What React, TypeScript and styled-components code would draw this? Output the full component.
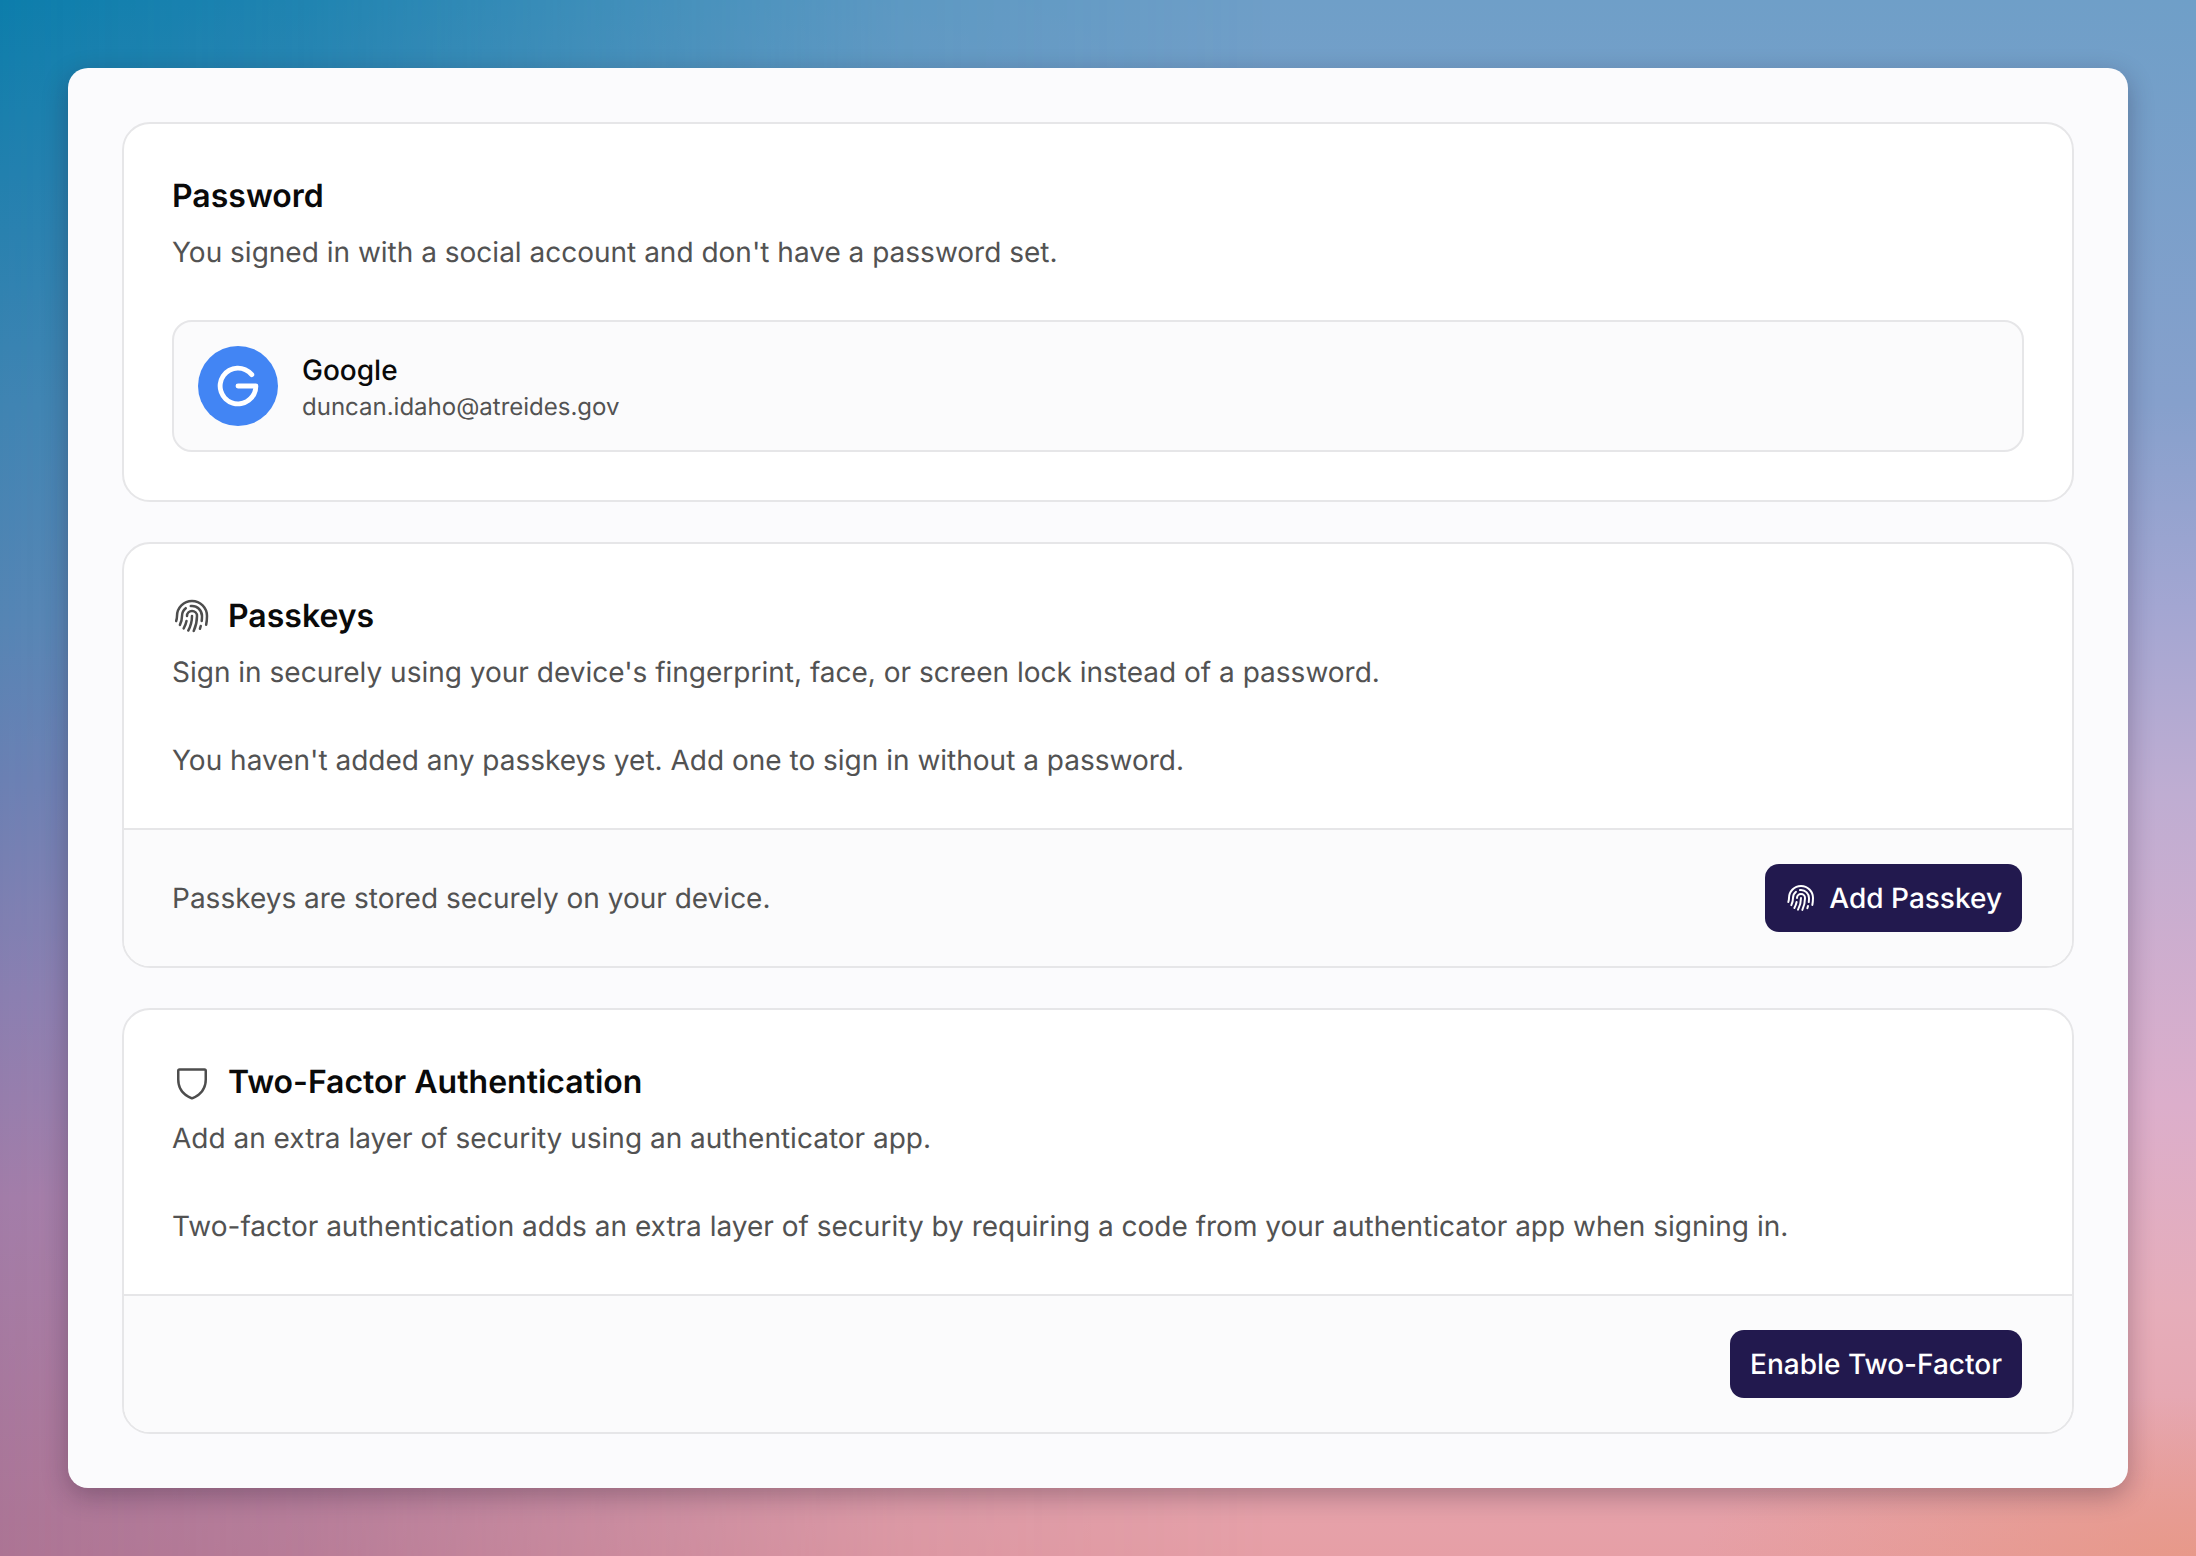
import styled, { createGlobalStyle } from "styled-components";
import { PiFingerprint, PiGoogleLogoBold, PiShield } from "react-icons/pi";

const GlobalStyle = createGlobalStyle`
  html, body {
    margin: 0;
    padding: 0;
  }
  body {
    font-family: Inter, "Liberation Sans", sans-serif;
    color: #0a0a0a;
    text-rendering: geometricPrecision;
  }
  * {
    box-sizing: border-box;
  }
`;

const Page = styled.div`
  position: relative;
  min-height: 1556px;
  padding: 68px;
  background:
    radial-gradient(ellipse 500px 160px at 100% 100%, rgba(232, 150, 125, 0.7), rgba(232, 150, 125, 0)),
    linear-gradient(180deg, #6f9fc8 0%, #86a0cc 26%, #a3a6d2 39%, #bfadd2 51%, #dcaecb 71%, #e6adba 84%, #e69fa6 100%);

  /* darker teal to mauve wash coming in from the left edge */
  &::before {
    content: "";
    position: absolute;
    inset: 0;
    background: linear-gradient(180deg, #0c7dab 0%, #3f84b2 26%, #5585b4 40%, #6a80b3 50%, #8a7eb0 64%, #a27ca8 77%, #ac7494 100%);
    mask-image: linear-gradient(90deg, #000 0%, rgba(0, 0, 0, 0.8) 14%, rgba(0, 0, 0, 0.5) 27%, rgba(0, 0, 0, 0.18) 41%, rgba(0, 0, 0, 0) 58%);
  }
`;

const Panel = styled.main`
  position: relative;
  display: flex;
  flex-direction: column;
  gap: 40px;
  padding: 54px;
  background: #fbfbfd;
  border-radius: 20px;
  box-shadow: 0 8px 26px rgba(30, 15, 40, 0.3);
`;

const Section = styled.section`
  background: #fff;
  border: 2px solid #e6e6e8;
  border-radius: 28px;
  overflow: hidden;
`;

const Body = styled.div`
  display: flex;
  flex-direction: column;
  padding: 48px;
`;

const Heading = styled.h2`
  display: flex;
  align-items: center;
  gap: 16px;
  height: 48px;
  margin: 0;
  font-size: 32px;
  font-weight: 600;
  line-height: 48px;
  color: #0a0a0a;

  svg {
    color: #4d4d4d;
    flex-shrink: 0;
  }
`;

const Text = styled.p<{ $gap: number }>`
  margin: ${(p) => p.$gap}px 0 0;
  font-size: 28px;
  line-height: 40px;
  color: #525252;
`;

const Account = styled.div`
  display: flex;
  align-items: center;
  gap: 24px;
  margin-top: 48px;
  padding: 24px;
  height: 132px;
  background: #fbfbfc;
  border: 2px solid #e6e6e8;
  border-radius: 20px;
`;

const Avatar = styled.div`
  display: flex;
  align-items: center;
  justify-content: center;
  width: 80px;
  height: 80px;
  border-radius: 50%;
  background: #4285f4;
  color: #fff;
`;

const AccountInfo = styled.div`
  display: flex;
  flex-direction: column;
  gap: 3px;
  padding-top: 2px;
`;

const AccountName = styled.div`
  font-size: 28px;
  font-weight: 500;
  line-height: 36px;
  color: #0a0a0a;
`;

const AccountEmail = styled.div`
  font-size: 24px;
  line-height: 32px;
  color: #525252;
`;

const Footer = styled.div<{ $end?: boolean }>`
  display: flex;
  align-items: center;
  justify-content: ${(p) => (p.$end ? "flex-end" : "space-between")};
  height: 138px;
  padding: 0 50px 0 48px;
  background: #fbfbfc;
  border-top: 2px solid #e6e6e8;
`;

const FooterNote = styled.span`
  font-size: 28px;
  color: #525252;
`;

const Button = styled.button`
  display: flex;
  align-items: center;
  gap: 12px;
  height: 68px;
  padding: 0 20px;
  border: none;
  border-radius: 14px;
  background: #22194e;
  color: #fff;
  font-family: inherit;
  font-size: 28px;
  font-weight: 500;
  text-rendering: inherit;
`;

export default function App() {
  return (
    <Page>
      <GlobalStyle />
      <Panel>
        <Section>
          <Body>
            <Heading>Password</Heading>
            <Text $gap={12}>You signed in with a social account and don't have a password set.</Text>
            <Account>
              <Avatar>
                <PiGoogleLogoBold size={52} />
              </Avatar>
              <AccountInfo>
                <AccountName>Google</AccountName>
                <AccountEmail>duncan.idaho@atreides.gov</AccountEmail>
              </AccountInfo>
            </Account>
          </Body>
        </Section>
        <Section>
          <Body>
            <Heading>
              <PiFingerprint size={40} />
              Passkeys
            </Heading>
            <Text $gap={12}>Sign in securely using your device's fingerprint, face, or screen lock instead of a password.</Text>
            <Text $gap={48}>You haven't added any passkeys yet. Add one to sign in without a password.</Text>
          </Body>
          <Footer>
            <FooterNote>Passkeys are stored securely on your device.</FooterNote>
            <Button>
              <PiFingerprint size={32} />
              Add Passkey
            </Button>
          </Footer>
        </Section>
        <Section>
          <Body>
            <Heading>
              <PiShield size={40} />
              Two-Factor Authentication
            </Heading>
            <Text $gap={12}>Add an extra layer of security using an authenticator app.</Text>
            <Text $gap={48}>Two-factor authentication adds an extra layer of security by requiring a code from your authenticator app when signing in.</Text>
          </Body>
          <Footer $end>
            <Button>Enable Two-Factor</Button>
          </Footer>
        </Section>
      </Panel>
    </Page>
  );
}
